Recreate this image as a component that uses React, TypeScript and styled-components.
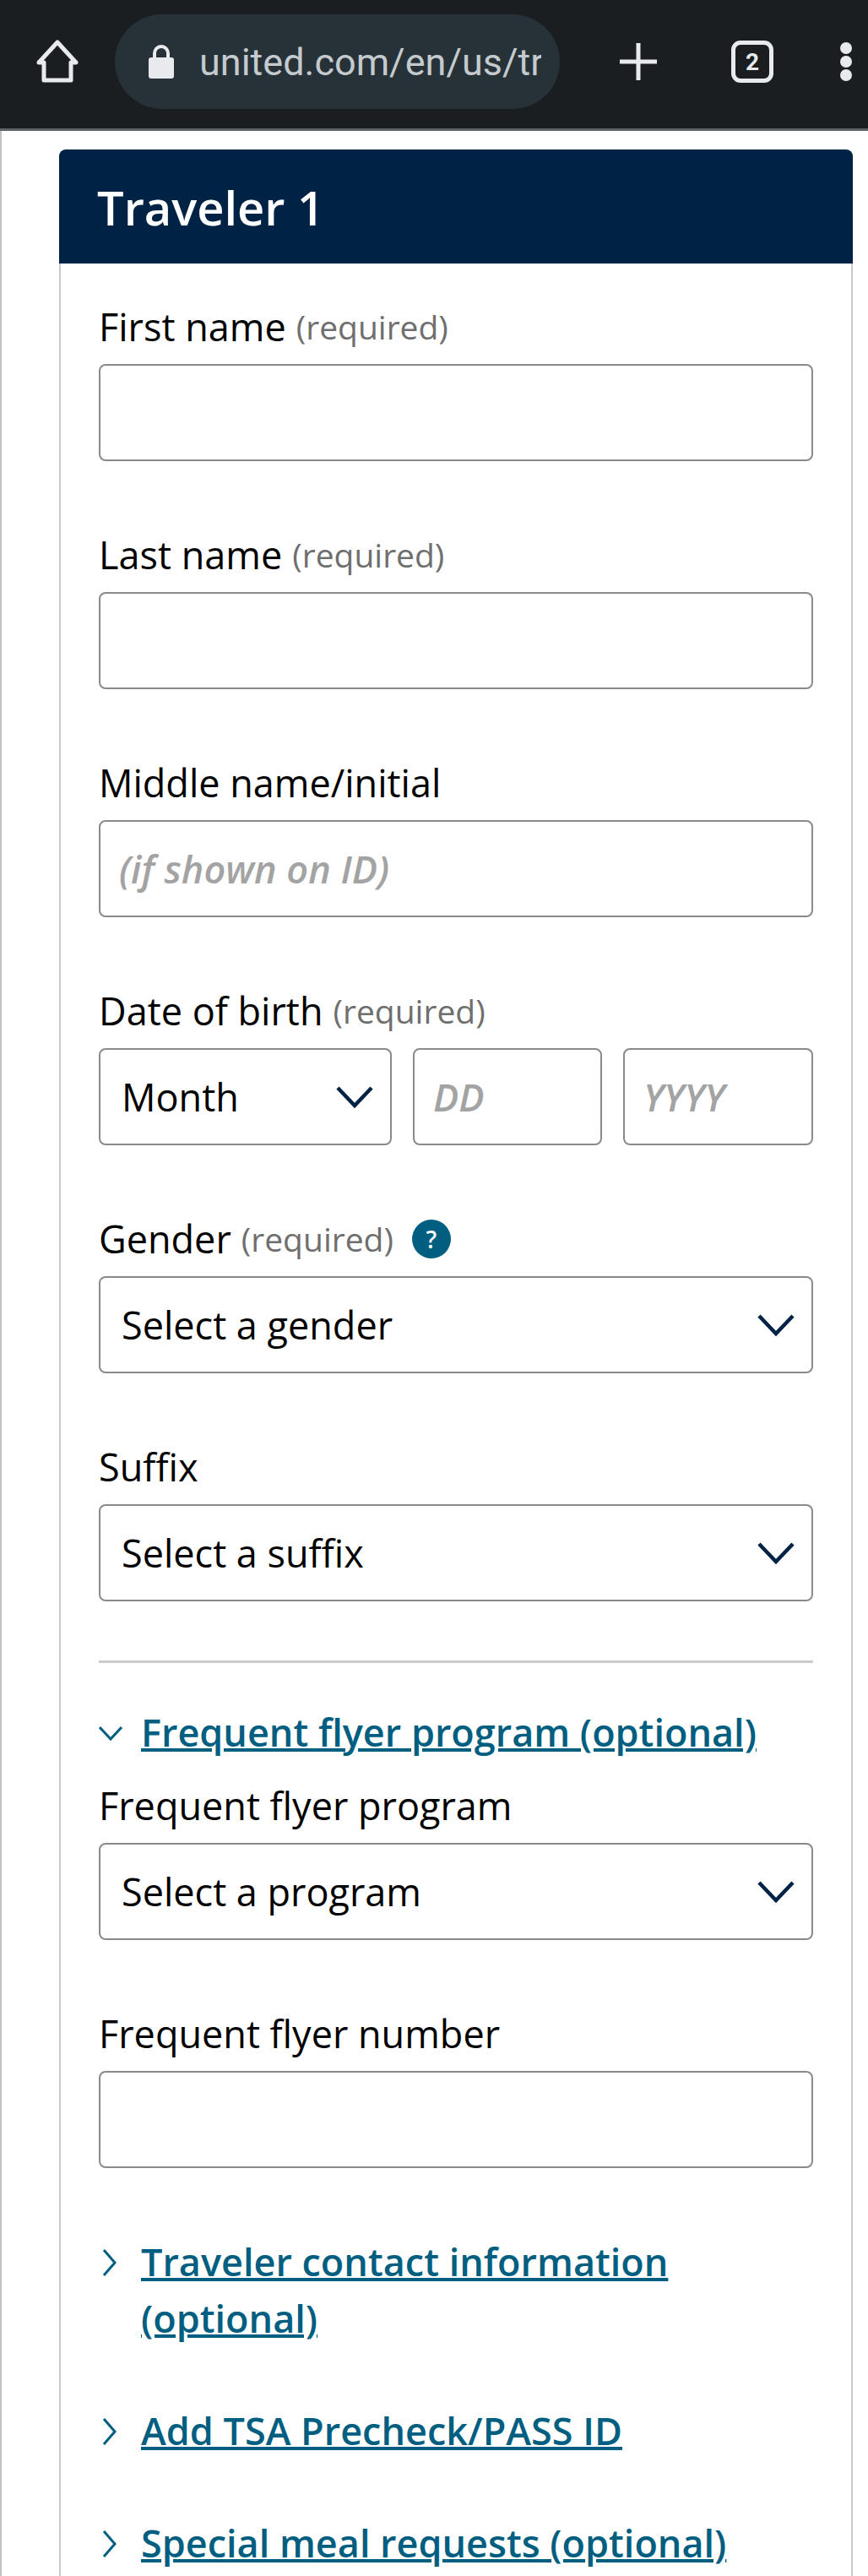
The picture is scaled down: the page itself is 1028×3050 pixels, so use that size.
import React from 'react';
import styled, { createGlobalStyle } from 'styled-components';

const GlobalStyle = createGlobalStyle`
	html, body {
		margin: 0;
		padding: 0;
		background: #fff;
	}
	* {
		box-sizing: border-box;
	}
`;

const Page = styled.div`
	width: 1028px;
	height: 3050px;
	overflow: hidden;
	font-family: 'Open Sans', sans-serif;
	color: #000;
	background: #fff;
`;

const BrowserBar = styled.div`
	height: 155px;
	display: flex;
	align-items: center;
	padding: 0 0 6px 43px;
	background: #1b1e20;
	border-bottom: 3px solid #5f6368;
`;

const HomeButton = styled.svg`
	width: 50px;
	height: 52px;
	flex: none;
`;

const UrlPill = styled.div`
	width: 527px;
	height: 112px;
	margin-left: 43px;
	padding: 0 22px 0 40px;
	display: flex;
	align-items: center;
	gap: 30px;
	flex: none;
	border-radius: 56px;
	background: #263238;
	overflow: hidden;
`;

const UrlText = styled.span`
	flex: 1;
	overflow: hidden;
	white-space: nowrap;
	font-family: Roboto, sans-serif;
	font-size: 45px;
	color: #c4cacd;
`;

const BarIcon = styled.svg`
	flex: none;
	margin-left: ${(p: { $gap: number }) => p.$gap}px;
`;

const TabCount = styled.div`
	width: 50px;
	height: 50px;
	margin-left: 87px;
	flex: none;
	display: flex;
	align-items: center;
	justify-content: center;
	border: 5px solid #e8eaed;
	border-radius: 11px;
	font-family: Roboto, sans-serif;
	font-size: 28px;
	font-weight: 700;
	color: #e8eaed;
`;

const Content = styled.div`
	height: 2895px;
	padding: 22px 18px 0 70px;
	border-left: 2px solid #c4c4c4;
`;

const Card = styled.section`
	width: 940px;
	margin-left: -2px;
`;

const CardHeader = styled.h2`
	height: 135px;
	margin: 0;
	padding: 0 45px;
	display: flex;
	align-items: center;
	border-radius: 8px 8px 0 0;
	background: #002244;
	color: #fff;
	font-size: 56px;
	font-weight: 600;
`;

const CardBody = styled.div`
	padding: 45px 45px 0 45px;
	border-left: 2px solid #ccc;
	border-right: 2px solid #ccc;
	min-height: 2760px;
`;

const Field = styled.div<{ $gap?: number }>`
	margin-bottom: ${(p) => p.$gap ?? 81}px;
`;

const Label = styled.label`
	display: flex;
	align-items: center;
	height: 60px;
	margin-bottom: 14px;
	font-size: 45px;
	line-height: 60px;
	white-space: nowrap;
`;

const Required = styled.span`
	margin-left: 12px;
	font-size: 39px;
	color: #6f6f6f;
`;

const HelpBadge = styled.span`
	width: 46px;
	height: 46px;
	margin-left: 22px;
	display: inline-flex;
	align-items: center;
	justify-content: center;
	border-radius: 50%;
	background: #005e80;
	color: #fff;
	font-size: 28px;
	font-weight: 600;
`;

const TextInput = styled.input<{ $width?: number }>`
	display: block;
	width: ${(p) => (p.$width ? `${p.$width}px` : '100%')};
	height: 115px;
	padding: 0 22px;
	border: 2px solid #8a8a8a;
	border-radius: 8px;
	background: #fff;
	font-family: 'Open Sans', sans-serif;
	font-size: 45px;
	outline: none;

	&::placeholder {
		color: #a3a3a3;
		font-style: italic;
		font-weight: 600;
		opacity: 1;
	}
`;

const SelectBox = styled.div<{ $width?: number }>`
	width: ${(p) => (p.$width ? `${p.$width}px` : '100%')};
	height: 115px;
	padding: 0 20px 0 25px;
	display: flex;
	align-items: center;
	justify-content: space-between;
	flex: none;
	border: 2px solid #8a8a8a;
	border-radius: 8px;
	font-size: 45px;
`;

const Chevron = styled.svg`
	width: 44px;
	height: 26px;
	flex: none;
`;

const DateRow = styled.div`
	display: flex;
	gap: 25px;
`;

const Divider = styled.hr`
	height: 3px;
	margin: 0 0 48px;
	border: 0;
	background: #ccc;
`;

const Accordion = styled.div<{ $gap: number }>`
	display: flex;
	align-items: flex-start;
	margin-bottom: ${(p) => p.$gap}px;
`;

const AccordionIcon = styled.svg`
	width: 28px;
	height: 66px;
	margin-right: 22px;
	flex: none;
`;

const AccordionLink = styled.a`
	width: 680px;
	font-size: 45px;
	font-weight: 600;
	line-height: 67px;
	color: #005e80;
	text-decoration: underline;
	text-decoration-thickness: 4px;
`;

const WideLink = styled(AccordionLink)`
	width: 780px;
	white-space: nowrap;
`;

function SelectChevron() {
	return (
		<Chevron viewBox="0 0 44 26">
			<path d="M2 2 L22 23 L42 2" fill="none" stroke="#002244" strokeWidth="4.5" />
		</Chevron>
	);
}

function RowArrow() {
	return (
		<AccordionIcon viewBox="0 0 28 66">
			<path d="M6 20 L19 35 L6 50" fill="none" stroke="#005e80" strokeWidth="3" />
		</AccordionIcon>
	);
}

export default function App() {
	return (
		<Page>
			<GlobalStyle />
			<BrowserBar>
				<HomeButton viewBox="0 0 50 52">
					<path d="M25 3 L47 27 H41 V48 H9 V27 H3 Z" fill="none" stroke="#e8eaed" strokeWidth="5" strokeLinejoin="round" />
				</HomeButton>
				<UrlPill>
					<svg width="30" height="40" viewBox="0 0 30 40" style={{ flex: 'none' }}>
						<path d="M7 16 V10 A8 8 0 0 1 23 10 V16" fill="none" stroke="#e8eaed" strokeWidth="4" />
						<rect x="0" y="15" width="30" height="25" rx="3" fill="#e8eaed" />
					</svg>
					<UrlText>united.com/en/us/travelers</UrlText>
				</UrlPill>
				<BarIcon $gap={70} width="46" height="46" viewBox="0 0 46 46">
					<path d="M23 1 V45 M1 23 H45" stroke="#e8eaed" strokeWidth="5" />
				</BarIcon>
				<TabCount>2</TabCount>
				<BarIcon $gap={77} width="18" height="46" viewBox="0 0 18 46">
					<circle cx="9" cy="7" r="7" fill="#e8eaed" />
					<circle cx="9" cy="23" r="7" fill="#e8eaed" />
					<circle cx="9" cy="39" r="7" fill="#e8eaed" />
				</BarIcon>
			</BrowserBar>
			<Content>
				<Card>
					<CardHeader>Traveler 1</CardHeader>
					<CardBody>
						<Field>
							<Label>First name<Required>(required)</Required></Label>
							<TextInput />
						</Field>
						<Field>
							<Label>Last name<Required>(required)</Required></Label>
							<TextInput />
						</Field>
						<Field>
							<Label>Middle name/initial</Label>
							<TextInput placeholder="(if shown on ID)" />
						</Field>
						<Field>
							<Label>Date of birth<Required>(required)</Required></Label>
							<DateRow>
								<SelectBox $width={347}>Month<SelectChevron /></SelectBox>
								<TextInput $width={224} placeholder="DD" />
								<TextInput $width={225} placeholder="YYYY" />
							</DateRow>
						</Field>
						<Field>
							<Label>Gender<Required>(required)</Required><HelpBadge>?</HelpBadge></Label>
							<SelectBox>Select a gender<SelectChevron /></SelectBox>
						</Field>
						<Field $gap={70}>
							<Label>Suffix</Label>
							<SelectBox>Select a suffix<SelectChevron /></SelectBox>
						</Field>
						<Divider />
						<Accordion $gap={24}>
							<AccordionIcon viewBox="0 0 28 66">
								<path d="M1 28 L14 42 L27 28" fill="none" stroke="#005e80" strokeWidth="3" />
							</AccordionIcon>
							<WideLink>Frequent flyer program (optional)</WideLink>
						</Accordion>
						<Field>
							<Label>Frequent flyer program</Label>
							<SelectBox>Select a program<SelectChevron /></SelectBox>
						</Field>
						<Field $gap={77}>
							<Label>Frequent flyer number</Label>
							<TextInput />
						</Field>
						<Accordion $gap={66}>
							<RowArrow />
							<AccordionLink>Traveler contact information (optional)</AccordionLink>
						</Accordion>
						<Accordion $gap={66}>
							<RowArrow />
							<WideLink>Add TSA Precheck/PASS ID</WideLink>
						</Accordion>
						<Accordion $gap={0}>
							<RowArrow />
							<WideLink>Special meal requests (optional)</WideLink>
						</Accordion>
					</CardBody>
				</Card>
			</Content>
		</Page>
	);
}
